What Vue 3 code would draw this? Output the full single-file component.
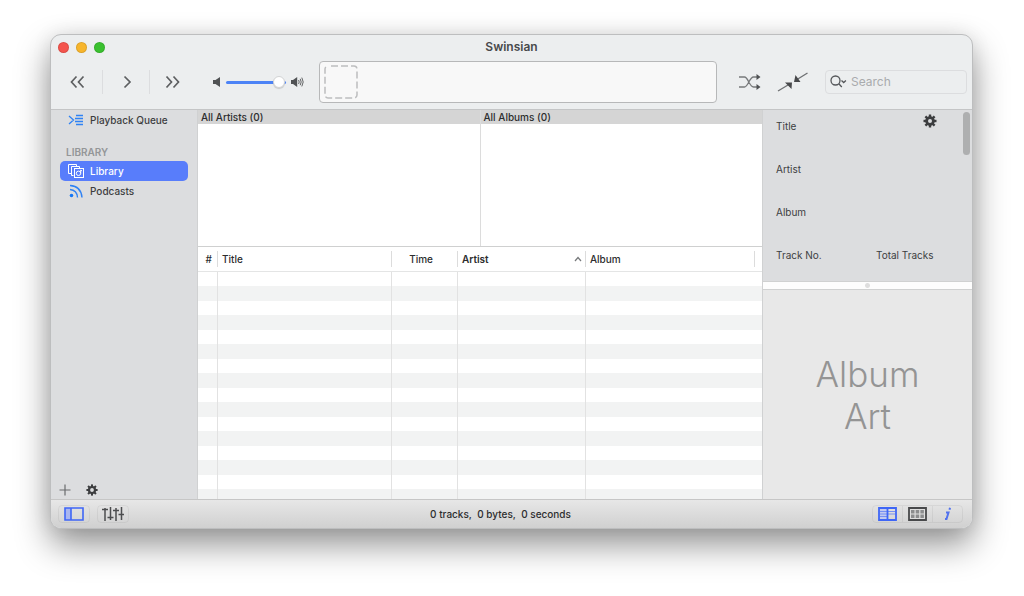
<script setup>
import { ref } from 'vue'

const volume = ref(97)
const query = ref('')
const rows = 60
const fields = ref({ title: '', artist: '', album: '', track: '', total: '' })
const teeth = [0, 45, 90, 135, 180, 225, 270, 315]
</script>

<template>
  <div class="desktop">
    <main class="window">
      <header class="toolbar">
        <div class="titlebar">
          <div class="lights">
            <button class="light close" aria-label="Close"></button>
            <button class="light minimize" aria-label="Minimize"></button>
            <button class="light expand" aria-label="Zoom"></button>
          </div>
          <h1>Swinsian</h1>
        </div>
        <div class="controls">
          <div class="transport">
            <button aria-label="Previous">
              <svg width="46" height="24" viewBox="0 0 46 24"><path d="M20.500 6.500L15.500 12l5 5.500M27.500 6.500L22.500 12l5 5.500" /></svg>
            </button>
            <button aria-label="Play">
              <svg width="46" height="24" viewBox="0 0 46 24"><path d="M21.500 6.500L27 12l-5.500 5.500" /></svg>
            </button>
            <button aria-label="Next">
              <svg width="46" height="24" viewBox="0 0 46 24"><path d="M16.500 6.500L21.500 12l-5 5.500M23.500 6.500L28.500 12l-5 5.500" /></svg>
            </button>
          </div>
          <div class="volume">
            <svg width="8" height="12" viewBox="0 0 8 12"><path d="M0 4h2.500L7 1v10L2.500 8H0z" fill="#505254" /></svg>
            <input v-model="volume" type="range" min="0" max="100" aria-label="Volume" />
            <svg width="13" height="12" viewBox="0 0 13 12">
              <path d="M0 4h2L6.200 1v10L2 8H0z" fill="#505254" />
              <path d="M7.600 4q1.200 2 0 4M9.200 2.800q2 3.200 0 6.400M10.800 1.600q2.800 4.400 0 8.800" fill="none" stroke="#606264" stroke-width="1" />
            </svg>
          </div>
          <div class="display">
            <svg width="34" height="34" viewBox="0 0 34 34"><rect x="1" y="1" width="32" height="32" rx="3" fill="none" stroke="#bcbdbe" stroke-width="1.500" stroke-dasharray="7 3" stroke-dashoffset="-3" /></svg>
          </div>
          <button class="mode" aria-label="Shuffle">
            <svg width="22" height="16" viewBox="0 0 22 16">
              <path d="M0 3h5.500c3.500 0 5 10 9 10h4M0 13h5.500c3.500 0 5-10 9-10h4" fill="none" stroke="#77797b" stroke-width="1.300" />
              <path d="M17.500 0l4 3-4 3zM17.500 10l4 3-4 3z" fill="#505254" />
            </svg>
          </button>
          <button class="mode" aria-label="Crossfade">
            <svg width="32" height="20" viewBox="0 0 32 20">
              <path d="M1 19l10-6M20 7.500L30.500 1" stroke="#707274" stroke-width="1.400" />
              <path d="M8 10.500h7l-.5 6.500zM18.500 3L23.500 10H17z" fill="#48494b" />
            </svg>
          </button>
          <label class="search">
            <svg width="17" height="14" viewBox="0 0 17 14" fill="none" stroke="#55575a" stroke-width="1.300">
              <circle cx="5.500" cy="5.500" r="4.500" />
              <path d="M8.800 8.800l3 3.200M11.500 5.500l2.200 2 2.200-2" />
            </svg>
            <input v-model="query" type="text" placeholder="Search" aria-label="Search" />
          </label>
        </div>
      </header>

      <div class="body">
        <aside class="sidebar">
          <nav>
            <a href="#queue">
              <svg width="16" height="12" viewBox="0 0 16 12" fill="none" stroke="#2f82f4" stroke-width="1.300"><path d="M1 2l4.500 4L1 10M8 1.500h7M7 4.500h8M7 7.500h8M8 10.500h7" /></svg>
              Playback Queue
            </a>
            <h2>LIBRARY</h2>
            <a href="#library" class="selected">
              <svg width="16" height="14" viewBox="0 0 16 14" fill="none" stroke="#fff" stroke-width="1">
                <path d="M3 9.500H.5v-9h8V2M5.500 11.500h-2v-9h8V4" />
                <rect x="6.500" y="4.500" width="9" height="9" /><circle cx="10.500" cy="9.300" r="2.200" /><path d="M12.700 9.500V6l1.300 1" />
              </svg>
              Library
            </a>
            <a href="#podcasts">
              <svg width="16" height="14" viewBox="0 0 16 14" fill="none" stroke="#2f82f4" stroke-width="1.400">
                <circle cx="3.500" cy="11.500" r="1.800" fill="#1677f5" stroke="none" />
                <path d="M2 5.500q7 .5 7.500 8M2 1.500q11 .5 12 12" />
              </svg>
              Podcasts
            </a>
          </nav>
          <div class="sidebar-actions">
            <button aria-label="Add"><svg width="12" height="12" viewBox="0 0 12 12"><path d="M6 .5v11M.5 6h11" stroke="#6a6c6e" stroke-width="1.200" /></svg></button>
            <button aria-label="Actions">
              <svg width="12" height="12" viewBox="-6 -6 12 12"><rect v-for="t in teeth" :key="t" x="-1" y="-5.600" width="2" height="3" fill="#3c3d3f" :transform="`rotate(${t})`" /><circle r="3" fill="none" stroke="#3c3d3f" stroke-width="2.200" /></svg>
            </button>
          </div>
        </aside>

        <section class="center">
          <div class="browser">
            <section class="pane"><h3>All Artists (0)</h3></section>
            <section class="pane"><h3>All Albums (0)</h3></section>
          </div>
          <div class="tracks">
            <table>
              <colgroup><col class="c-num" /><col /><col class="c-time" /><col class="c-artist" /><col class="c-album" /></colgroup>
              <thead>
                <tr>
                  <th class="num">#</th>
                  <th>Title</th>
                  <th class="time">Time</th>
                  <th class="sorted" aria-sort="ascending"><span>Artist<svg width="8" height="6" viewBox="0 0 8 6"><path d="M1 5l3-3.500L7 5" fill="none" stroke="#77797b" stroke-width="1.200" /></svg></span></th>
                  <th class="last">Album</th>
                </tr>
              </thead>
              <tbody>
                <tr v-for="r in rows" :key="r"><td></td><td></td><td></td><td></td><td></td></tr>
              </tbody>
            </table>
          </div>
        </section>

        <aside class="inspector">
          <form class="info" @submit.prevent>
            <label>Title<input v-model="fields.title" type="text" /></label>
            <label>Artist<input v-model="fields.artist" type="text" /></label>
            <label>Album<input v-model="fields.album" type="text" /></label>
            <div class="pair">
              <label>Track No.<input v-model="fields.track" type="text" /></label>
              <label>Total Tracks<input v-model="fields.total" type="text" /></label>
            </div>
            <button class="gear" type="button" aria-label="Info options">
              <svg width="14" height="14" viewBox="-7 -7 14 14"><rect v-for="t in teeth" :key="t" x="-1.200" y="-6.500" width="2.400" height="3" fill="#3c3d3f" :transform="`rotate(${t})`" /><circle r="3.400" fill="none" stroke="#3c3d3f" stroke-width="2.800" /></svg>
            </button>
            <div class="thumb"></div>
          </form>
          <div class="splitter"></div>
          <div class="art">Album<br />Art</div>
        </aside>
      </div>

      <footer class="statusbar">
        <div class="group">
          <button class="boxed" aria-label="Toggle sidebar">
            <svg width="20" height="14" viewBox="0 0 20 14"><path d="M1 1h6v12H1z" fill="#a9b6f0" /><path d="M1 1h18v12H1zM7 1v12" fill="none" stroke="#3f66f6" stroke-width="1.600" /></svg>
          </button>
          <button class="boxed" aria-label="Equalizer">
            <svg width="22" height="14" viewBox="0 0 22 14" fill="none" stroke="#4c4d4f" stroke-width="1.500"><path d="M3 1v13M8.500 0v13M14 1v13M19.500 0v13M0 2.500h6M5.500 10.500h6M11 3.500h6M16.500 7.500h6" /></svg>
          </button>
        </div>
        <p>0 tracks,&nbsp; 0 bytes,&nbsp; 0 seconds</p>
        <div class="views">
          <button aria-label="Column view">
            <svg width="19" height="14" viewBox="0 0 19 14"><path d="M1 1h8v12H1z" fill="#c3caf0" /><path d="M2 4.500h15M2 7h15M2 9.500h7" stroke="#7790f2" /><path d="M1 1h17v12H1zM9.500 1v12" fill="none" stroke="#3f66f6" stroke-width="1.800" /></svg>
          </button>
          <button aria-label="Grid view">
            <svg width="19" height="14" viewBox="0 0 19 14"><path d="M1 1h17v12H1z" fill="#dedede" stroke="#48494b" stroke-width="1.800" /><path d="M3 3h3.500v3.500H3zM7.700 3h3.500v3.500H7.700zM12.400 3h3.500v3.500h-3.500zM3 7.600h3.500v3.500H3zM7.700 7.600h3.500v3.500H7.700zM12.400 7.600h3.500v3.500h-3.500z" fill="#8c8d8e" /></svg>
          </button>
          <button aria-label="Info">
            <svg width="10" height="14" viewBox="0 0 10 14" fill="none" stroke="#5272ee" stroke-width="2"><path d="M3 5.500h2.500L3.500 12H2M7 .8L6.500 2.800" /></svg>
          </button>
        </div>
      </footer>
    </main>
  </div>
</template>

<style>
html, body { margin: 0; background: #fff; }
</style>

<style scoped>
.desktop {
  box-sizing: border-box;
  height: 100vh;
  min-height: 420px;
  padding: 34px 51px 67px 50px;
  overflow: hidden;
  font: 500 10px/14px Inter, "Liberation Sans", sans-serif;
  color: #3c3d3f;
}
button {
  display: flex;
  align-items: center;
  justify-content: center;
  padding: 0;
  border: 0;
  background: none;
}
input { font: inherit; color: inherit; }
h1, h2, h3, p { margin: 0; font-size: 10px; }
svg { display: block; flex: none; }
.window {
  box-sizing: border-box;
  display: flex;
  flex-direction: column;
  height: 100%;
  border: 1px solid #bdbebf;
  border-radius: 11px;
  overflow: hidden;
  background: #eceeef;
  box-shadow: 0 16px 34px rgba(0, 0, 0, 0.42), 0 0 20px rgba(0, 0, 0, 0.08);
}
.toolbar { flex: none; border-bottom: 1px solid #c4c5c6; }
.titlebar {
  display: grid;
  grid-template-columns: 1fr auto 1fr;
  align-items: center;
  height: 24px;
}
.titlebar h1 { font-size: 12px; font-weight: 600; color: #48494b; }
.lights { display: flex; gap: 7px; padding-left: 7px; }
.light {
  box-sizing: border-box;
  width: 11px;
  height: 11px;
  border: 1px solid rgba(0, 0, 0, 0.1);
  border-radius: 50%;
}
.close { background: #f4544d; }
.minimize { background: #f7b52c; }
.expand { background: #3ac12f; }
.controls { display: flex; align-items: center; height: 46px; margin-bottom: 4px; padding: 0 5px; }
.transport { display: flex; }
.transport button + button { border-left: 1px solid #dcdddf; }
.transport path { fill: none; stroke: #5d5f61; stroke-width: 1.7; }
.volume { display: flex; align-items: center; gap: 5px; margin: 0 15px 0 17px; }
.volume input {
  width: 60px;
  height: 12px;
  margin: 0;
  appearance: none;
  background: none;
}
.volume input::-webkit-slider-runnable-track {
  height: 3px;
  border-radius: 2px;
  background: #4c83f6;
}
.volume input::-webkit-slider-thumb {
  appearance: none;
  width: 12px;
  height: 12px;
  margin-top: -5px;
  border: 1px solid #d3d4d5;
  border-radius: 50%;
  background: #fff;
  box-shadow: 0 1px 1px rgba(0, 0, 0, 0.15);
}
.display {
  box-sizing: border-box;
  flex: 1;
  display: flex;
  align-items: center;
  height: 42px;
  margin-right: 22px;
  padding-left: 4px;
  border: 1px solid #b7b8b9;
  border-radius: 4px;
  background: #f8f8f8;
}
.mode { margin-right: 16px; }
.search {
  box-sizing: border-box;
  display: flex;
  align-items: center;
  gap: 4px;
  width: 142px;
  height: 24px;
  padding-left: 4px;
  border: 1px solid #dcdddf;
  border-radius: 4px;
}
.search input {
  flex: 1;
  min-width: 0;
  padding: 0;
  border: 0;
  outline: 0;
  background: none;
  font-size: 12px;
  font-weight: 400;
}
.search input::placeholder { color: #a9abad; }
.body { flex: 1; display: flex; min-height: 0; }
.sidebar {
  box-sizing: border-box;
  flex: none;
  display: flex;
  flex-direction: column;
  justify-content: space-between;
  width: 147px;
  border-right: 1px solid #d0d1d2;
  background: #dcdddf;
}
nav { padding: 0 9px; }
nav a {
  display: flex;
  align-items: center;
  gap: 6px;
  height: 20px;
  padding-left: 8px;
  border-radius: 5px;
  color: inherit;
  text-decoration: none;
}
nav a.selected { background: #587dfb; color: #fff; }
nav h2 { margin: 15px 0 2px; padding-left: 6px; font-weight: 600; color: #949698; }
.sidebar-actions { display: flex; gap: 15px; padding: 0 0 3px 8px; }
.center { flex: 1; display: flex; flex-direction: column; min-width: 0; background: #fff; }
.browser { flex: none; display: flex; height: 136px; border-bottom: 1px solid #cfd0d0; }
.pane { flex: 1; }
.pane + .pane { border-left: 1px solid #dcdcdc; }
.pane h3 { padding-left: 3px; background: #d5d5d5; font-weight: 500; color: #2c2d2e; }
.tracks { flex: 1; min-height: 0; overflow: hidden; }
table { width: 100%; table-layout: fixed; border-collapse: separate; border-spacing: 0; }
.c-num { width: 20px; }
.c-time { width: 66px; }
.c-artist { width: 128px; }
.c-album { width: 176px; }
th {
  box-sizing: border-box;
  height: 25px;
  padding: 0 4px;
  border-bottom: 1px solid #e4e5e5;
  text-align: left;
  font-weight: 500;
  color: #2c2d2e;
  background: linear-gradient(#dcdcdc, #dcdcdc) right 4px / 1px 16px no-repeat;
}
th.last { background-position: right 7px top 4px; }
th:not(.last) { background-position: right top 4px; }
.num { padding: 0 6px 0 4px; text-align: right; }
.time { padding-right: 25px; text-align: right; }
.sorted { font-weight: 600; }
.sorted span { display: flex; align-items: center; justify-content: space-between; }
td { height: 14px; padding: 0; border-right: 1px solid #e2e2e2; }
td:last-child { border-right: 0; }
tbody tr:nth-child(even) td { height: 15px; background: #f2f3f3; }
.inspector {
  box-sizing: border-box;
  flex: none;
  display: flex;
  flex-direction: column;
  width: 210px;
  border-left: 1px solid #d0d1d2;
  background: #e8e8e8;
}
.info {
  position: relative;
  display: flex;
  flex-direction: column;
  gap: 8px;
  padding: 9px 28px 0 13px;
  background: #dcdddf;
  font-weight: 400;
}
.info label { display: flex; flex-direction: column; color: #3c3d3f; }
.info input { width: 100%; height: 21px; box-sizing: border-box; padding: 0; border: 0; outline: 0; background: none; }
.pair { display: grid; grid-template-columns: 100px 1fr; margin-bottom: -2px; }
.gear { position: absolute; top: 4px; right: 35px; }
.thumb { position: absolute; top: 2px; right: 2px; width: 7px; height: 43px; border-radius: 4px; background: #aeafb0; }
.splitter {
  flex: none;
  height: 7px;
  border-top: 1px solid #d0d1d1;
  border-bottom: 1px solid #d0d1d1;
  background: radial-gradient(circle, #dedede 2px, #fdfdfd 3px);
}
.art {
  flex: 1;
  display: flex;
  align-items: center;
  justify-content: center;
  text-align: center;
  font-size: 35px;
  font-weight: 300;
  line-height: 42px;
  color: #949494;
}
.statusbar {
  box-sizing: border-box;
  flex: none;
  display: flex;
  align-items: center;
  height: 29px;
  padding: 0 9px 0 7px;
  border-top: 1px solid #c6c6c6;
  background: linear-gradient(#e7e7e7, #d0d0d0);
}
.statusbar p { flex: 1; text-align: center; color: #2c2d2e; }
.group { display: flex; gap: 7px; }
.boxed, .views { box-sizing: border-box; height: 18px; border: 1px solid rgba(0, 0, 0, 0.05); border-radius: 4px; }
.boxed { width: 32px; }
.views { display: flex; width: 91px; }
.views button { flex: 1; }
.views button + button { border-left: 1px solid rgba(0, 0, 0, 0.05); }
</style>
